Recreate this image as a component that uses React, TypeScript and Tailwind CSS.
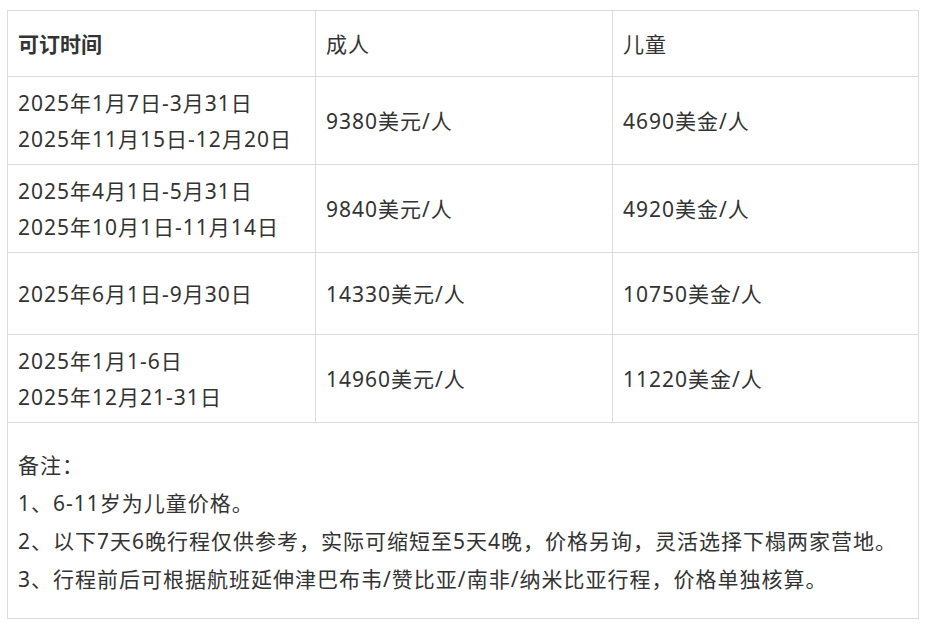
import React from 'react'

interface IRow {
  dates: string[]
  adult: string
  child: string
  height: string
}

const rows: IRow[] = [
  { dates: ['2025年1月7日-3月31日', '2025年11月15日-12月20日'], adult: '9380美元/人', child: '4690美金/人', height: 'h-[88px]' },
  { dates: ['2025年4月1日-5月31日', '2025年10月1日-11月14日'], adult: '9840美元/人', child: '4920美金/人', height: 'h-[88px]' },
  { dates: ['2025年6月1日-9月30日'], adult: '14330美元/人', child: '10750美金/人', height: 'h-[82px]' },
  { dates: ['2025年1月1-6日', '2025年12月21-31日'], adult: '14960美元/人', child: '11220美金/人', height: 'h-[88px]' },
]

const notes = [
  '备注：',
  '1、6-11岁为儿童价格。',
  '2、以下7天6晚行程仅供参考，实际可缩短至5天4晚，价格另询，灵活选择下榻两家营地。',
  '3、行程前后可根据航班延伸津巴布韦/赞比亚/南非/纳米比亚行程，价格单独核算。',
]

const Cell = ({ children, className = '' }: { children: React.ReactNode; className?: string }) => (
  <div className={`flex flex-col justify-center border-r border-b border-[#dcdcdc] pl-[10px] ${className}`}>
    {children}
  </div>
)

export default function App() {
  return (
    <div className="min-h-[630px] bg-white pl-[7px] pt-[10px] text-[21px] leading-[36px] tracking-[1px] text-[#333]" style={{ fontFamily: '"Noto Sans", "Noto Sans CJK SC", sans-serif' }}>
      <div className="w-[912px] border-l border-t border-[#dcdcdc]">
        <div className="grid h-[66px] grid-cols-[308px_297px_306px]">
          <Cell className="font-bold tracking-normal">可订时间</Cell>
          <Cell>成人</Cell>
          <Cell>儿童</Cell>
        </div>
        {rows.map((row, index) => (
          <div key={index} className={`grid grid-cols-[308px_297px_306px] ${row.height}`}>
            <Cell>
              {row.dates.map((d, i) => (
                <div key={i}>{d}</div>
              ))}
            </Cell>
            <Cell>{row.adult}</Cell>
            <Cell>{row.child}</Cell>
          </div>
        ))}
        <div className="h-[196px] border-r border-b border-[#dcdcdc] pl-[10px] pt-[23px] leading-[38px]">
          {notes.map((n, i) => (
            <div key={i}>{n}</div>
          ))}
        </div>
      </div>
    </div>
  )
}
